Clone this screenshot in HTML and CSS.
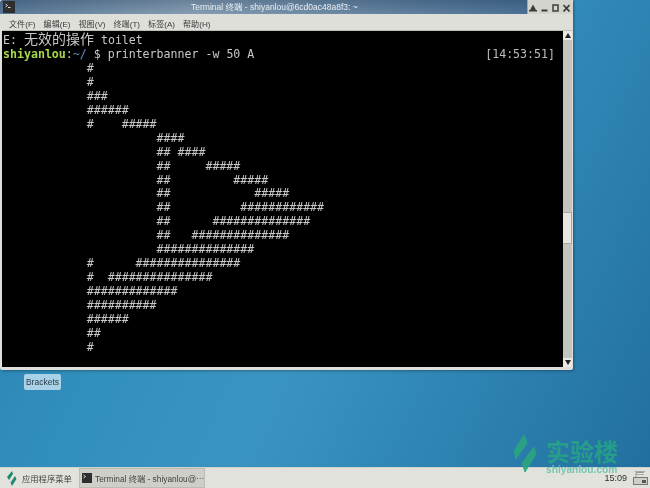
FILE: index.html
```html
<!DOCTYPE html>
<html lang="zh">
<head>
<meta charset="utf-8">
<title>Terminal</title>
<link rel="stylesheet" href="styles.css">
</head>
<body>
<div class="screen">
  <main class="desktop">
    <section class="window">
      <header class="titlebar">
        <span class="winicon"><svg width="12" height="12" viewBox="0 0 12 12"><rect width="12" height="12" fill="#2e2e2e"/><path d="M2.500 3l2 1.500-2 1.500" fill="none" stroke="#ddd" stroke-width="1"/><rect x="5" y="6" width="2.500" height="1" fill="#ddd"/></svg></span>
        <span class="wintitle">Terminal 终端 - shiyanlou@6cd0ac48a8f3: ~</span>
        <span class="controls">
          <svg width="8" height="8" viewBox="0 0 8 8"><path d="M4 .5l3 5.500H1z" fill="#3c3c3c"/><rect y="6" width="8" height="1.500" fill="#3c3c3c"/></svg>
          <svg width="7" height="8" viewBox="0 0 7 8"><rect x=".5" y="5.500" width="6" height="2" fill="#3c3c3c"/></svg>
          <svg width="7" height="8" viewBox="0 0 7 8"><rect x="1" y="1" width="5" height="6" fill="none" stroke="#3c3c3c" stroke-width="1.500"/></svg>
          <svg width="7" height="8" viewBox="0 0 7 8"><path d="M.5 1l6 6.500M6.500 1l-6 6.500" stroke="#3c3c3c" stroke-width="1.700"/></svg>
        </span>
      </header>
      <nav class="menubar">
        <span>文件(F)</span><span>编辑(E)</span><span>视图(V)</span><span>终端(T)</span><span>标签(A)</span><span>帮助(H)</span>
      </nav>
      <div class="termrow">
        <div class="terminal">
          <span class="clock">[14:53:51]</span>
<pre class="output">E: <span class="cjk">无效的操作</span> toilet
<span class="user">shiyanlou</span>:<span class="path">~/</span> $ printerbanner -w 50 A
            #
            #
            ###
            ######
            #    #####
                      ####
                      ## ####
                      ##     #####
                      ##         #####
                      ##            #####
                      ##          ############
                      ##      ##############
                      ##   ##############
                      ##############
            #      ###############
            #  ###############
            #############
            ##########
            ######
            ##
            #</pre>
        </div>
        <aside class="scrollbar">
          <span class="arrow"><svg width="6" height="5" viewBox="0 0 6 5"><path d="M3 0l3 5H0z" fill="#222"/></svg></span>
          <span class="track"><span class="thumb"></span></span>
          <span class="arrow"><svg width="6" height="5" viewBox="0 0 6 5"><path d="M3 5l3-5H0z" fill="#222"/></svg></span>
        </aside>
      </div>
    </section>
    <div class="launcher">Brackets</div>
  </main>
  <footer class="panel">
    <div class="appmenu">
      <svg width="10" height="15" viewBox="0 0 10 15"><path d="M5 0l1 3-4 6-2-3z" fill="#1f8a70"/><path d="M8 5l1.500 3-4.500 7-1.500-3.500z" fill="#1f8a70"/></svg>
      <span>应用程序菜单</span>
    </div>
    <div class="task">
      <span class="taskicon"><svg width="10" height="10" viewBox="0 0 10 10"><path d="M1.500 2l2 1.500-2 1.500" fill="none" stroke="#ddd"/></svg></span>
      <span class="tasklabel">Terminal 终端 - shiyanlou@⋯</span>
    </div>
    <div class="tray">
      <span class="time">15:09</span>
      <svg width="17" height="16" viewBox="0 0 17 16"><rect x="1.500" y="7.500" width="14" height="7" fill="#cfcfca" stroke="#777"/><path d="M4 7V2.500h8" fill="none" stroke="#999"/><path d="M3 4.500h9M3 1.500h10" stroke="#aaa"/><rect x="10" y="10" width="4" height="3" fill="#555"/></svg>
    </div>
  </footer>
  <div class="watermark">
    <svg width="25" height="39" viewBox="0 0 25 39"><path d="M11 1l3 8L3 25 1 17z" fill="#2aa57f" stroke="#2aa57f" stroke-linejoin="round"/><path d="M21 13l2 7-11 18-3-9z" fill="#2aa57f" stroke="#2aa57f" stroke-linejoin="round"/></svg>
    <div class="wmtext"><span class="wmcn">实验楼</span><span class="wmen">shiyanlou.com</span></div>
  </div>
</div>
</body>
</html>
```
FILE: styles.css
```css
* { box-sizing: border-box; }
html, body { margin: 0; padding: 0; }
body { width: 650px; height: 488px; overflow: hidden; background: #2d86b4; }
.screen {
  width: 650px; height: 488px; display: flex; flex-direction: column; position: relative;
  font-family: "Liberation Sans", "Noto Sans CJK SC", sans-serif;
  filter: blur(0.5px);
}
.desktop {
  flex: 1; position: relative; overflow: hidden;
  background: linear-gradient(115deg, #2a7cab 0%, #318fbd 30%, #3a94c2 52%, #2f86b4 72%, #226f9f 100%);
}
.window {
  position: absolute; left: 0; top: 0; width: 573px; height: 370px;
  display: flex; flex-direction: column;
  background: #dfdfda; border-radius: 0 0 2px 2px;
  box-shadow: 1px 1px 3px rgba(0,0,0,.3);
  padding: 0 1px 3px 2px;
}
.titlebar {
  height: 14px; margin: 0 -1px 0 -2px; padding: 0 3px; position: relative;
  display: flex; align-items: center; justify-content: space-between;
  background:
    linear-gradient(180deg, rgba(30,50,75,.22), rgba(255,255,255,.06)) 0 0 / 527px 100% no-repeat,
    linear-gradient(90deg, #4f7191 0%, #7f98ae 33%, #5c7d9c 65%, #42698f 92%, #d4d4cf 92.1%);
  border-radius: 3px 4px 0 0;
}
.winicon { display: flex; }
.wintitle {
  position: absolute; left: 191px; top: 2px; font-size: 8.500px; line-height: 10px;
  color: #e9eef2; white-space: nowrap;
}
.controls { display: flex; align-items: center; gap: 4px; padding-top: 2px; }
.menubar {
  height: 17px; display: flex; align-items: center; gap: 8px; padding: 2px 0 0 7px;
  font-size: 8.100px; color: #3a3a3a; background: #dfdfda;
  border-bottom: 1px solid #bdbdb8;
}
.termrow { flex: 1; display: flex; min-height: 0; }
.terminal { flex: 1; background: #000; position: relative; overflow: hidden; padding: 2px 0 0 1px; }
.output {
  margin: 0; font-family: "DejaVu Sans Mono", "Noto Sans CJK SC", monospace;
  font-size: 11.600px; line-height: 13.950px; color: #c8c8c8;
}
.cjk { font-size: 14px; line-height: 10px; font-family: "Noto Sans CJK SC", sans-serif; }
.user { color: #a6d84a; font-weight: 700; }
.path { color: #5f8fc4; }
.clock {
  position: absolute; right: 8px; top: 16px;
  font-family: "DejaVu Sans Mono", monospace; font-size: 11.600px; line-height: 14px; color: #bdbdbd;
}
.scrollbar { width: 9px; display: flex; flex-direction: column; background: #c4c4bf; }
.arrow { height: 9px; background: #e8e8e4; display: flex; align-items: center; justify-content: center; }
.track { flex: 1; position: relative; }
.thumb {
  position: absolute; left: 0; right: 0; top: 172px; height: 32px;
  background: #e6e6e1; border: 1px solid #a8a8a3; border-left: 0;
}
.launcher {
  position: absolute; left: 24px; top: 374px; width: 37px; height: 16px;
  border-radius: 2px; background: rgba(190,222,240,.85);
  color: #2b3a48; font-size: 8.500px; line-height: 16px; text-align: center;
}
.watermark { position: absolute; left: 513px; top: 434px; display: flex; gap: 8px; opacity: .92; }
.wmtext { display: flex; flex-direction: column; align-items: flex-start; padding-top: 3px; }
.wmcn { font-size: 24px; line-height: 27px; font-weight: 700; color: #26a287; font-family: "Noto Sans CJK SC", sans-serif; }
.wmen { font-size: 10.200px; line-height: 12px; color: #6cc4ae; font-weight: 700; margin-top: 0; }
.panel {
  height: 21px; display: flex; align-items: center; padding-left: 7px;
  background: #e2e2dd; border-top: 1px solid #d2d2cd; position: relative;
  font-size: 8.300px; color: #3f3f3f;
}
.appmenu { display: flex; align-items: center; gap: 5px; width: 72px; }
.task {
  width: 126px; height: 20px; display: flex; align-items: center; gap: 3px; padding-left: 2px;
  background: #cfcfca; border: 1px solid #bcbcb7;
}
.taskicon { width: 10px; height: 10px; background: #2e2e2e; display: flex; }
.tasklabel { white-space: nowrap; }
.tray { margin-left: auto; display: flex; align-items: center; gap: 5px; padding-right: 1px; font-size: 9px; color: #2e2e2e; }
```
